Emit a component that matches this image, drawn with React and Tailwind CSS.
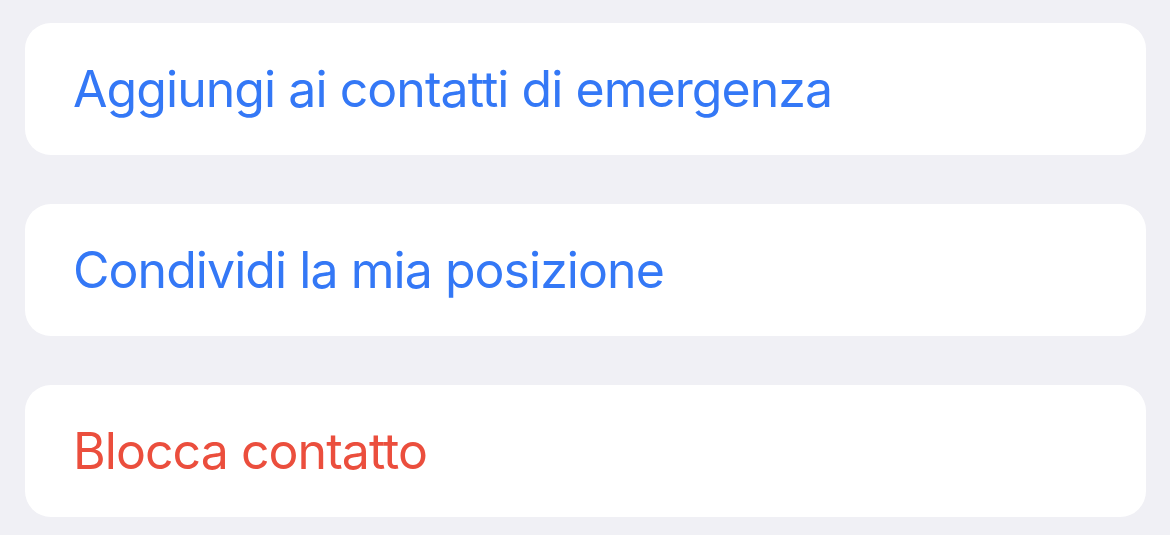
export default function App() {
  const items = [
    { t: "Aggiungi ai contatti di emergenza", c: "text-[#3478f6]" },
    { t: "Condividi la mia posizione", c: "text-[#3478f6]" },
    { t: "Blocca contatto", c: "text-[#eb4e3d]" },
  ];
  return (
    <div className="w-[1170px] h-[535px] bg-[#f0f0f5] pt-[23px] px-[25px] flex flex-col gap-[49px]" style={{ fontFamily: "Inter, 'Noto Sans', sans-serif" }}>
      {items.map((it) => (
        <div key={it.t} className="h-[132px] w-[1121px] bg-white rounded-[26px] flex items-center pl-[48px]">
          <span className={`text-[50px] leading-none tracking-[-0.95px] ${it.c}`}>{it.t}</span>
        </div>
      ))}
    </div>
  );
}
